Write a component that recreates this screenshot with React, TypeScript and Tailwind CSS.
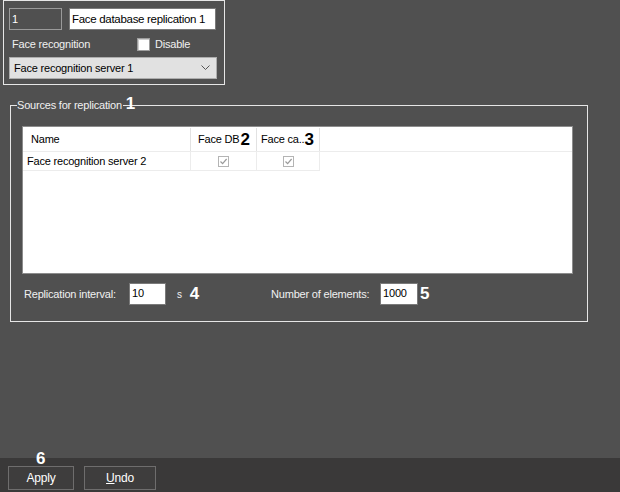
import React from 'react';

const font = { fontFamily: '"Liberation Sans", Arial, sans-serif' };

const GrayCheck: React.FC = () => (
  <span className="inline-flex w-[11px] h-[11px] items-center justify-center border border-[#b4b4b4] bg-white">
    <svg width="9" height="9" viewBox="0 0 9 9">
      <path d="M1.5 4.5 L3.6 6.6 L7.6 2" fill="none" stroke="#9a9a9a" strokeWidth="1.2" />
    </svg>
  </span>
);

export default function App() {
  return (
    <div
      className="w-[620px] h-[492px] flex flex-col bg-[#505050] text-[11px] tracking-[-0.2px] overflow-hidden whitespace-nowrap"
      style={font}
    >
      <div className="flex-1 flex flex-col">
        {/* Object settings */}
        <div className="ml-[3px] w-[222px] h-[85px] border border-[#e6e6e6] px-[5px] pt-[7px] flex flex-col">
          <div className="flex gap-[7px]">
            <div className="w-[53px] h-[22px] border border-[#9a9a9a] text-white pl-[2px] leading-[20px]">1</div>
            <div className="w-[147px] h-[22px] bg-white border border-[#7a7a7a] text-black pl-[2px] leading-[20px] text-[11.5px] tracking-[-0.3px] overflow-hidden">
              Face database replication 1
            </div>
          </div>
          <div className="flex items-center h-[14px] mt-[7px] text-[#f0f0f0]">
            <span className="ml-[3px] w-[125px]">Face recognition</span>
            <span className="w-[13px] h-[13px] bg-white border border-[#9d9d9d] shadow-[inset_1px_1px_0_#cfcfcf]" />
            <span className="ml-[5px]">Disable</span>
          </div>
          <div className="mt-[6px] w-[208px] h-[22px] bg-[#e1e1e1] border border-[#adadad] flex items-center justify-between pl-[4px] pr-[6px] text-black">
            <span>Face recognition server 1</span>
            <svg width="9" height="6" viewBox="0 0 9 6">
              <path d="M0.5 0.5 L4.5 4.5 L8.5 0.5" fill="none" stroke="#555" strokeWidth="1" />
            </svg>
          </div>
        </div>

        {/* Sources group */}
        <fieldset className="ml-[10px] mt-[13px] w-[578px] h-[224px] border border-[#e6e6e6] pl-[11px] pr-[14px]">
          <legend className="relative ml-[-5px] pr-[1px] text-[#f0f0f0] leading-[14px]">
            Sources for replication
            <span className="absolute left-[calc(100%+3px)] top-[-3px] text-[17px] font-bold text-white leading-[17px]">1</span>
          </legend>

          <div className="mt-[14px] h-[148px] bg-white border border-[#8c8c8c] flex flex-col text-black">
            <div className="flex h-[23px] mt-[1px] items-center">
              <div className="w-[168px] h-full border-r border-[#e2e2e2] pl-[8px] flex items-center">Name</div>
              <div className="w-[66px] h-full border-r border-[#e2e2e2] pl-[7px] flex items-center">
                Face DB<span className="text-[17px] font-bold ml-[1px] leading-none">2</span>
              </div>
              <div className="w-[63px] h-full border-r border-[#e2e2e2] pl-[4px] flex items-center">
                Face ca..<span className="text-[17px] font-bold leading-none">3</span>
              </div>
            </div>
            <div className="flex h-[20px] items-center border-t border-[#ececec]">
              <div className="w-[168px] h-full border-r border-b border-[#ececec] pl-[4px] flex items-center">
                Face recognition server 2
              </div>
              <div className="w-[66px] h-full border-r border-b border-[#ececec] flex items-center justify-center">
                <GrayCheck />
              </div>
              <div className="w-[63px] h-full border-r border-b border-[#ececec] flex items-center justify-center">
                <GrayCheck />
              </div>
            </div>
          </div>

          <div className="mt-[9px] flex items-center h-[22px] text-[#f0f0f0]">
            <span className="ml-[2px] w-[105px]">Replication interval:</span>
            <div className="w-[37px] h-[22px] bg-white border border-[#7a7a7a] text-black pl-[2px] leading-[18px]">10</div>
            <span className="ml-[11px] text-[10px]">s</span>
            <span className="ml-[8px] text-[17px] font-bold text-white">4</span>
            <span className="ml-[72px] w-[109px]">Number of elements:</span>
            <div className="w-[38px] h-[22px] bg-white border border-[#7a7a7a] text-black pl-[2px] leading-[18px]">1000</div>
            <span className="ml-[2px] text-[17px] font-bold text-white">5</span>
          </div>
        </fieldset>
      </div>

      {/* Bottom bar */}
      <div className="relative h-[34px] bg-[#3a3939] flex items-start pt-[8px] pl-[8px] gap-[10px] text-white">
        <span className="absolute left-[36px] top-[-8px] text-[17px] font-bold leading-[17px]">6</span>
        <button className="w-[66px] h-[24px] border border-[#6e6d6d] bg-[#3e3d3d] text-[12px]">Apply</button>
        <button className="w-[72px] h-[24px] border border-[#6e6d6d] bg-[#3e3d3d] text-[12px]">
          <span className="underline">U</span>ndo
        </button>
      </div>
    </div>
  );
}
